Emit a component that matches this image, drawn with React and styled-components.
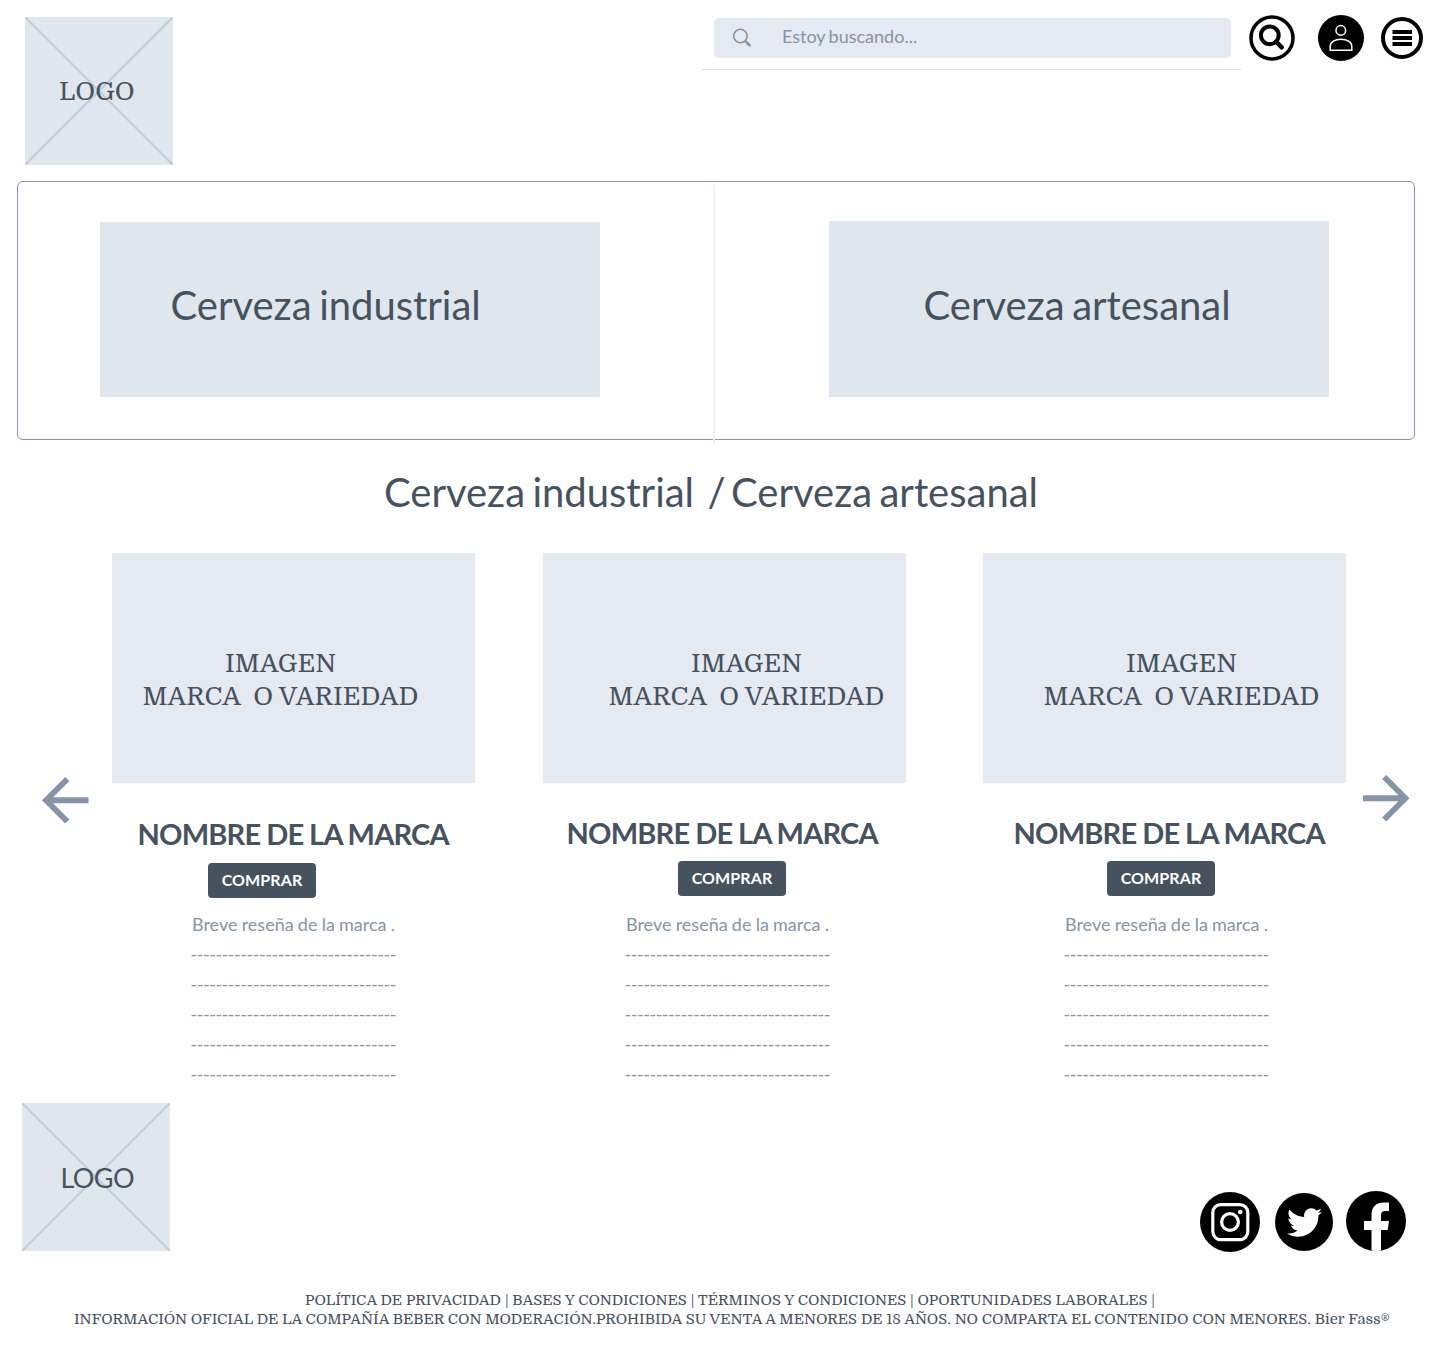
import React from "react";
import styled, { createGlobalStyle } from "styled-components";
import { FaTwitter } from "react-icons/fa";

const ink = "#47525f";
const muted = "#8594a9";
const tile = "#dfe6ee";
const soft = "#e4e9f2";
const sans = `Lato, "Open Sans", sans-serif`;
const serif = `Domine, "Noto Serif", "DejaVu Serif Condensed", "DejaVu Serif", serif`;

const Global = createGlobalStyle`
  * { box-sizing: border-box; }
  body { margin: 0; background: #fefefe; color: ${ink}; font-family: ${sans}; }
  h1, h2, h3, p { margin: 0; font-weight: 400; }
  svg { display: block; flex: none; }
`;

const Page = styled.div`
  width: 1440px;
  height: 1348px;
  display: flex;
  flex-direction: column;
  overflow: hidden;
`;

const Header = styled.header`
  display: flex;
  height: 181px;
  flex: none;
  padding: 15px 17px 0 25px;
  align-items: flex-start;
`;

const LogoBox = styled.div`
  display: grid;
  width: 148px;
  height: 148px;
  margin-top: ${(p) => p.$top || 0}px;
  background: ${tile};
  > * { grid-area: 1 / 1; }
`;

const LogoText = styled.span`
  place-self: center start;
  margin: ${(p) => p.$drop || 0}px 0 0 ${(p) => p.$left}px;
  font-family: ${(p) => (p.$serif ? serif : sans)};
  font-size: ${(p) => p.$size}px;
  letter-spacing: ${(p) => p.$track || 0}px;
  line-height: 32px;
`;

const SearchArea = styled.div`
  width: 539px;
  height: 55px;
  margin-left: 529px;
  padding: 2.5px 10.5px 0 12px;
  border-bottom: 1px solid #dce1ea;
`;

const SearchBar = styled.div`
  display: flex;
  align-items: center;
  gap: 30px;
  height: 40px;
  padding-left: 18px;
  border-radius: 5px;
  background: ${soft};
`;

const Placeholder = styled.span`
  padding-bottom: 3px;
  color: ${muted};
  font-size: 18px;
  line-height: 24px;
  word-spacing: -1.2px;
`;

const Tools = styled.nav`
  display: flex;
  align-items: center;
  margin-left: 8px;
  height: 46px;
`;

const ToolIcon = styled.svg`
  margin-left: ${(p) => p.$gap || 0}px;
`;

const Categories = styled.section`
  display: flex;
  align-items: flex-start;
  width: 1398px;
  height: 259px;
  margin-left: 17px;
  flex: none;
  border: 1px solid ${muted};
  border-radius: 6px;
`;

const Category = styled.div`
  display: flex;
  align-items: center;
  width: 500px;
  height: ${(p) => p.$height}px;
  margin: ${(p) => p.$margin};
  padding: 0 0 ${(p) => p.$lift}px ${(p) => p.$indent}px;
  background: ${tile};
`;

const CategoryName = styled.h1`
  font-size: 40px;
  line-height: 48px;
  word-spacing: -2.6px;
  letter-spacing: -0.02px;
  white-space: nowrap;
`;

const Separator = styled.div`
  width: 2px;
  height: 260px;
  margin-top: 2px;
  background: #eef1f6;
`;

const Heading = styled.h2`
  display: flex;
  height: 48px;
  flex: none;
  margin: 28px 0 0 384px;
  font-size: 40px;
  line-height: 48px;
  word-spacing: -2.8px;
  letter-spacing: -0.02px;
  white-space: nowrap;
`;

const Slash = styled.span`
  margin: 0 5.5px 0 13.5px;
`;

const Carousel = styled.section`
  display: flex;
  height: 587px;
  flex: none;
  padding: 37px 0 0 42px;
`;

const Arrow = styled.svg`
  width: 46.5px;
  height: 46.5px;
  margin-top: ${(p) => p.$top}px;
  margin-left: ${(p) => p.$gap || 0}px;
  fill: ${muted};
`;

const Card = styled.article`
  width: 363px;
  flex: none;
  margin-left: ${(p) => p.$gap}px;
`;

const Picture = styled.div`
  height: 230px;
  padding: 94px 0 0 ${(p) => p.$indent}px;
  background: ${soft};
`;

const Caption = styled.p`
  width: 276px;
  display: flex;
  flex-direction: column;
  align-items: center;
  font-family: ${serif};
  font-size: 26px;
  line-height: 33px;
  white-space: pre;
`;

const Brand = styled.h3`
  margin: ${(p) => p.$top}px 0 0 ${(p) => p.$indent}px;
  font-size: 29px;
  font-weight: 700;
  letter-spacing: -0.8px;
  word-spacing: -0.4px;
  line-height: 36px;
  white-space: nowrap;
`;

const Buy = styled.button`
  display: block;
  width: 108px;
  height: 35px;
  margin: ${(p) => p.$top}px 0 0 ${(p) => p.$indent}px;
  padding: 0 0 2px;
  border: 0;
  border-radius: 4px;
  background: ${ink};
  color: #fff;
  font: 700 16px ${sans};
  letter-spacing: 0.1px;
`;

const Review = styled.div`
  margin: ${(p) => p.$top}px 0 0 ${(p) => p.$indent}px;
  color: ${muted};
  font-size: 18px;
  line-height: 30px;
  word-spacing: -0.4px;
  white-space: nowrap;
`;

const Dashes = styled.p`
  margin-left: -1.5px;
  letter-spacing: -0.46px;
`;

const Footer = styled.footer`
  display: flex;
  justify-content: space-between;
  height: 185px;
  flex: none;
  padding: 0 34px 0 22px;
`;

const Socials = styled.div`
  display: flex;
  align-items: flex-start;
  padding-top: 86px;
`;

const Social = styled.div`
  display: grid;
  width: ${(p) => p.$size}px;
  height: ${(p) => p.$size}px;
  margin: ${(p) => p.$top || 0}px 0 0 ${(p) => p.$gap || 0}px;
  place-items: center;
  border-radius: 50%;
  background: #000;
  color: #fff;
  overflow: hidden;
`;

const Legal = styled.div`
  display: flex;
  flex-direction: column;
  align-items: flex-start;
  padding-top: 3px;
`;

const LegalLine = styled.p`
  margin-left: ${(p) => p.$left}px;
  font-family: ${serif};
  font-size: 15px;
  line-height: 19px;
  white-space: nowrap;
`;

const Cross = () => (
  <svg width="148" height="148" viewBox="0 0 148 148" stroke="#c1ccda" strokeWidth="2">
    <path d="M0.5 0.5 147.5 147.5M147.5 0.5 0.5 147.5" />
  </svg>
);

const arrowLeft = "M20 11H7.83l5.59-5.59L12 4l-8 8 8 8 1.41-1.41L7.83 13H20v-2z";
const arrowRight = "M12 4l-1.41 1.41L16.17 11H4v2h12.17l-5.58 5.59L12 20l8-8z";

const cards = [
  { gap: 23, caption: 31, brand: [33, 26], buy: [11, 96.5], review: [11, 80.5] },
  { gap: 68.5, caption: 65.5, brand: [32, 23.5], buy: [10, 135], review: [13, 83] },
  { gap: 77, caption: 60.5, brand: [32, 30.5], buy: [10, 124], review: [13, 82] },
];

export default function App() {
  return (
    <Page>
      <Global />
      <Header>
        <LogoBox $top={2}>
          <Cross />
          <LogoText $serif $size={26} $left={34} $drop={2}>LOGO</LogoText>
        </LogoBox>
        <SearchArea>
          <SearchBar>
            <svg width="20" height="20" viewBox="0 0 20 20" fill="none" stroke="#8e9199">
              <circle cx="8.4" cy="8" r="6.7" strokeWidth="1.6" />
              <path d="M13.1 12.8 18.4 18.2" strokeWidth="2.4" />
            </svg>
            <Placeholder>Estoy buscando...</Placeholder>
          </SearchBar>
        </SearchArea>
        <Tools>
          <ToolIcon width="46" height="46" viewBox="0 0 46 46" fill="none" stroke="#000">
            <circle cx="23" cy="23" r="21" strokeWidth="3.5" />
            <circle cx="20.8" cy="20.3" r="8.9" strokeWidth="4" />
            <path d="M27 26.5 32.7 32.4" strokeWidth="4.4" strokeLinecap="round" />
          </ToolIcon>
          <ToolIcon $gap={23} width="46" height="46" viewBox="0 0 46 46" fill="none" stroke="#fff" strokeWidth="1.5">
            <circle cx="23" cy="23" r="23" fill="#000" stroke="none" />
            <circle cx="22.8" cy="15.4" r="4.8" />
            <path d="M12.2 35.3V31.5C12.2 27 17 24.3 23 24.3S33.8 27 33.8 31.5V35.3Z" />
          </ToolIcon>
          <ToolIcon $gap={17} width="42" height="42" viewBox="0 0 42 42">
            <circle cx="21" cy="21" r="19" fill="none" stroke="#000" strokeWidth="4" />
            <path d="M11.5 13h19.5v4H11.5zM11.5 19h19.5v4H11.5zM11.5 25h19.5v4H11.5z" />
          </ToolIcon>
        </Tools>
      </Header>

      <Categories>
        <Category $height={175} $margin="40px 113px 0 82px" $indent={70.5} $lift={10}>
          <CategoryName>Cerveza industrial</CategoryName>
        </Category>
        <Separator />
        <Category $height={176} $margin="39px 0 0 114px" $indent={94.5} $lift={9}>
          <CategoryName>Cerveza artesanal</CategoryName>
        </Category>
      </Categories>

      <Heading>
        <span>Cerveza industrial</span>
        <Slash>/</Slash>
        <span>Cerveza artesanal</span>
      </Heading>

      <Carousel>
        <Arrow viewBox="4 4 16 16" $top={223.5}><path d={arrowLeft} /></Arrow>
        {cards.map((c, i) => (
          <Card key={i} $gap={c.gap}>
            <Picture $indent={c.caption}>
              <Caption>
                <span>IMAGEN</span>
                <span>{"MARCA  O VARIEDAD"}</span>
              </Caption>
            </Picture>
            <Brand $top={c.brand[0]} $indent={c.brand[1]}>NOMBRE DE LA MARCA</Brand>
            <Buy $top={c.buy[0]} $indent={c.buy[1]}>COMPRAR</Buy>
            <Review $top={c.review[0]} $indent={c.review[1]}>
              <p>Breve reseña de la marca .</p>
              {[0, 1, 2, 3, 4].map((n) => (
                <Dashes key={n}>{"-".repeat(33)}</Dashes>
              ))}
            </Review>
          </Card>
        ))}
        <Arrow viewBox="4 4 16 16" $top={221.5} $gap={16.5}><path d={arrowRight} /></Arrow>
      </Carousel>

      <Footer>
        <LogoBox>
          <Cross />
          <LogoText $size={27} $track={-0.6} $left={38.5} $drop={1}>LOGO</LogoText>
        </LogoBox>
        <Socials>
          <Social $size={60} $top={3}>
            <svg width="60" height="60" viewBox="0 0 60 60" fill="none" stroke="#fff">
              <rect x="12.8" y="12.6" width="35" height="35" rx="8" strokeWidth="3.2" />
              <circle cx="30" cy="30" r="8.4" strokeWidth="3.2" />
              <circle cx="40.2" cy="20" r="2.3" fill="#fff" stroke="none" />
            </svg>
          </Social>
          <Social $size={58} $top={4.4} $gap={15}>
            <FaTwitter size={35} />
          </Social>
          <Social $size={60} $top={2} $gap={13}>
            <svg width="60" height="60" viewBox="0 0 60 60" fill="#fff">
              <path d="M25.5 60V39H18V30h7.5v-6C25.5 16 30 11.5 38 11.5h5V20h-4c-3 0-4 2-4 4.5V30h8l-1.3 9H35v21z" />
            </svg>
          </Social>
        </Socials>
      </Footer>

      <Legal>
        <LegalLine $left={305}>
          POLÍTICA DE PRIVACIDAD | BASES Y CONDICIONES | TÉRMINOS Y CONDICIONES | OPORTUNIDADES LABORALES |
        </LegalLine>
        <LegalLine $left={74}>
          INFORMACIÓN OFICIAL DE LA COMPAÑÍA BEBER CON MODERACIÓN.PROHIBIDA SU VENTA A MENORES DE 18 AÑOS. NO COMPARTA EL CONTENIDO CON MENORES. Bier Fass®
        </LegalLine>
      </Legal>
    </Page>
  );
}
